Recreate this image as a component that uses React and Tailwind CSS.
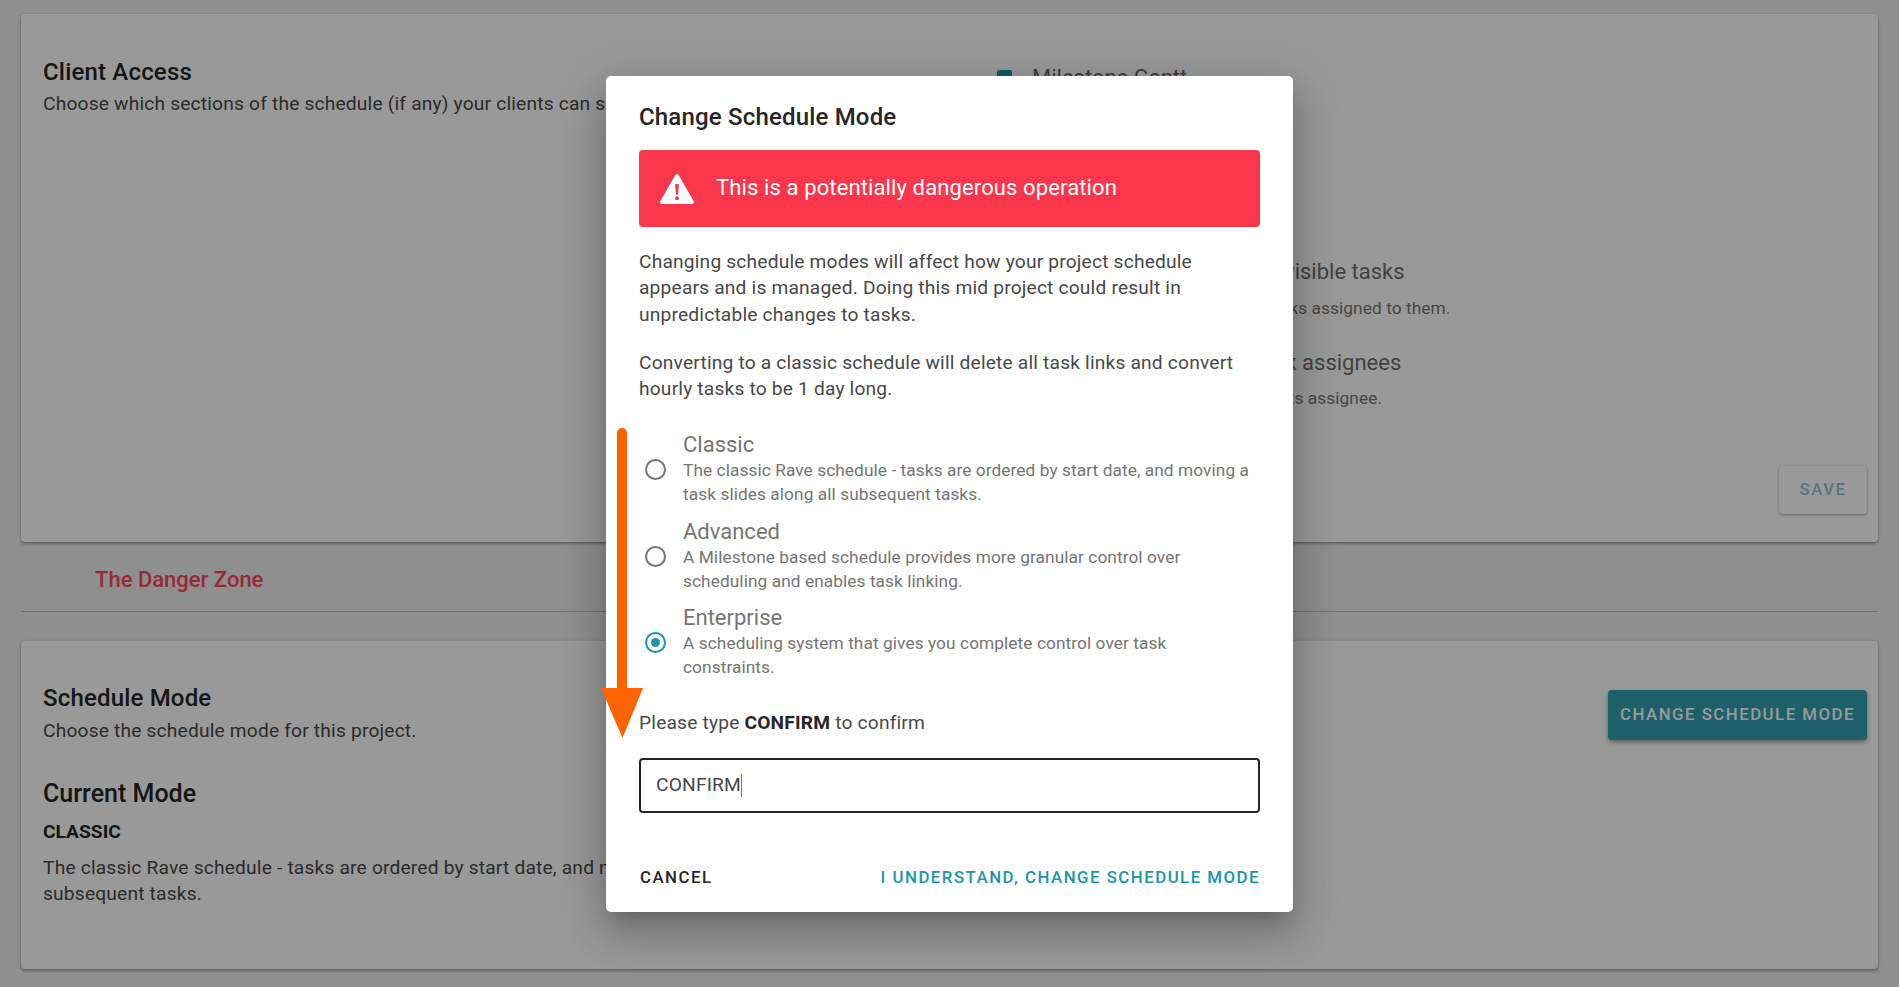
import React from 'react';

const roboto = "font-['Roboto','Liberation_Sans',sans-serif]";
const body = 'text-[19.2px] tracking-[0.18px] text-[#484848]';
const sub = 'text-[17.28px] tracking-[0.08px] leading-[24px]';
const action = 'text-[16.8px] font-medium tracking-[1.5px]';

const modes = [
  {
    name: 'Classic',
    text: 'The classic Rave schedule - tasks are ordered by start date, and moving a task slides along all subsequent tasks.',
  },
  {
    name: 'Advanced',
    text: 'A Milestone based schedule provides more granular control over scheduling and enables task linking.',
  },
  {
    name: 'Enterprise',
    text: 'A scheduling system that gives you complete control over task constraints.',
    selected: true,
  },
];

function Radio({ selected }) {
  return (
    <span className={`flex h-[21px] w-[21px] shrink-0 items-center justify-center rounded-full border-2 ${selected ? 'border-[#1a97a8]' : 'border-[#757575]'}`}>
      {selected && <span className="h-[9px] w-[9px] rounded-full bg-[#1a97a8]" />}
    </span>
  );
}

function ClientAccessCard() {
  return (
    <section className="flex h-[528px] flex-col rounded-[4px] bg-white pb-[28px] pl-[22px] pr-[11px] pt-[44px] shadow-[0_2px_3px_rgba(0,0,0,0.3),0_0_3px_rgba(0,0,0,0.12)]">
      <div className="flex">
        <div className="w-[954px] shrink-0">
          <h2 className="text-[24px] font-medium leading-[28px] tracking-[0.18px] text-[#262626]">Client Access</h2>
          <p className={`mt-[5px] leading-[26px] ${body}`}>
            Choose which sections of the schedule (if any) your clients can see.
          </p>
        </div>
        <div className="flex flex-col pt-[5px]">
          <div className="flex h-[28px] items-center gap-[20px]">
            <span className="h-[15px] w-[15px] rounded-[2px] bg-[#1a97a8]" />
            <span className="text-[22px] text-[#666666]">Milestone Gantt</span>
          </div>
          <div className="ml-[87px] mt-[167px] text-[22px] leading-[28px] text-[#6e6e6e]">Clients can only see visible tasks</div>
          <div className={`ml-[83px] mt-[10px] text-[#757575] ${sub}`}>Clients will only see the tasks assigned to them.</div>
          <div className="ml-[72px] mt-[29px] text-[22px] leading-[28px] text-[#6e6e6e]">Clients cannot see task assignees</div>
          <div className={`ml-[86px] mt-[9px] text-[#757575] ${sub}`}>Clients will not see the tasks assignee.</div>
        </div>
      </div>
      <div className="mt-auto flex justify-end">
        <button className={`h-[48px] w-[88px] rounded-[4px] bg-[#ffffff] text-[#8fc6ce] shadow-[0_1px_3px_rgba(0,0,0,0.35)] ${action}`}>
          SAVE
        </button>
      </div>
    </section>
  );
}

function ScheduleModeCard() {
  return (
    <section className="mt-[29px] flex h-[328px] justify-between rounded-[4px] bg-white pl-[22px] pr-[11px] pt-[41px] shadow-[0_2px_3px_rgba(0,0,0,0.3),0_0_3px_rgba(0,0,0,0.12)]">
      <div className="w-[900px]">
        <h2 className="text-[24px] font-medium leading-[32px] tracking-[0.18px] text-[#262626]">Schedule Mode</h2>
        <p className={`mt-[4px] leading-[26px] ${body}`}>Choose the schedule mode for this project.</p>
        <h2 className="mt-[34px] text-[25px] font-medium leading-[32px] text-[#262626]">Current Mode</h2>
        <p className="mt-[9px] text-[19.2px] font-bold leading-[26px] text-[#262626]">CLASSIC</p>
        <p className={`mt-[10px] leading-[26px] ${body}`}>
          The classic Rave schedule - tasks are ordered by start date, and moving a task slides along all subsequent tasks.
        </p>
      </div>
      <button className={`mt-[8px] h-[50px] w-[259px] rounded-[4px] bg-[#2fa0b1] font-bold text-white shadow-[0_2px_4px_rgba(0,0,0,0.4)] ${action}`}>
        CHANGE SCHEDULE MODE
      </button>
    </section>
  );
}

function ChangeModeDialog() {
  return (
    <div role="dialog" className="absolute left-[606px] top-[76px] h-[836px] w-[687px] rounded-[5px] bg-white px-[33px] pt-[25px] shadow-[0_11px_15px_-7px_rgba(0,0,0,0.2),0_24px_38px_3px_rgba(0,0,0,0.14),0_9px_46px_8px_rgba(0,0,0,0.12)]">
      <h1 className="text-[24px] font-medium leading-[32px] tracking-[0.18px] text-[#262626]">Change Schedule Mode</h1>

      <div className="mt-[17px] flex h-[77px] items-center rounded-[4px] bg-[#f9364c] pb-[2px] pl-[21px] text-white">
        <svg width="34" height="30" viewBox="0 0 34 30" className="mt-[2px] shrink-0">
          <path d="M15.3 1 a2 2 0 0 1 3.4 0 L33.6 27 a2 2 0 0 1 -1.7 3 H2.1 a2 2 0 0 1 -1.7 -3 Z" fill="#fff" />
          <path d="M15.2 10 H18.8 L18.1 20.5 H15.9 Z" fill="#f9364c" />
          <circle cx="17" cy="24.3" r="2" fill="#f9364c" />
        </svg>
        <span className="ml-[22px] text-[22px] tracking-[0.12px]">This is a potentially dangerous operation</span>
      </div>

      <p className={`mt-[22px] leading-[26.4px] ${body}`}>
        Changing schedule modes will affect how your project schedule appears and is managed. Doing this mid project could result in unpredictable changes to tasks.
      </p>
      <p className={`mt-[21.6px] leading-[26.6px] ${body}`}>
        Converting to a classic schedule will delete all task links and convert hourly tasks to be 1 day long.
      </p>

      <div className="mt-[29px] flex flex-col gap-[12.5px]">
        {modes.map((mode) => (
          <div key={mode.name} className="flex items-center">
            <div className="ml-[6px] mr-[17px] mt-[1px]"><Radio selected={mode.selected} /></div>
            <div className="pr-[5px]">
              <div className="text-[22px] leading-[26px] text-[#757575]">{mode.name}</div>
              <div className={`text-[#757575] ${sub}`}>{mode.text}</div>
            </div>
          </div>
        ))}
      </div>

      <p className={`mt-[31px] leading-[26.6px] ${body}`}>
        Please type <strong className="font-bold text-[#262626]">CONFIRM</strong> to confirm
      </p>

      <div className={`mt-[21px] flex h-[55px] items-center rounded-[4px] border-2 border-[#262626] px-[15px] pt-[1px] ${body}`}>
        CONFIRM<span className="h-[23px] w-px bg-[#1a97a8]" />
      </div>

      <div className={`mt-[45px] flex h-[40px] items-center justify-between pl-[1px] ${action}`}>
        <button className="text-[#262626]">CANCEL</button>
        <button className="text-[#1a97a8]">I UNDERSTAND, CHANGE SCHEDULE MODE</button>
      </div>
    </div>
  );
}

export default function App() {
  return (
    <div className={`relative h-[987px] overflow-hidden bg-[#eeeeee] ${roboto}`}>
      <main className="px-[21px] pt-[14px]">
        <ClientAccessCard />
        <div className="flex h-[70px] items-center border-b border-[#bdbdbd] pl-[74px] pt-[5px] text-[22px] font-medium text-[#f9485e]">
          The Danger Zone
        </div>
        <ScheduleModeCard />
      </main>

      {/* backdrop */}
      <div className="absolute inset-0 bg-black/40" />

      <ChangeModeDialog />

      {/* orange arrow drawn on top of the screenshot */}
      <svg width="42" height="310" viewBox="0 0 42 310" className="absolute left-[601px] top-[428px]">
        <path d="M16 260 V5 a5 5 0 0 1 10 0 V260 Z" fill="#ff6200" />
        <path d="M0 260 H42 L21.5 310 Z" fill="#ff6200" />
      </svg>
    </div>
  );
}
